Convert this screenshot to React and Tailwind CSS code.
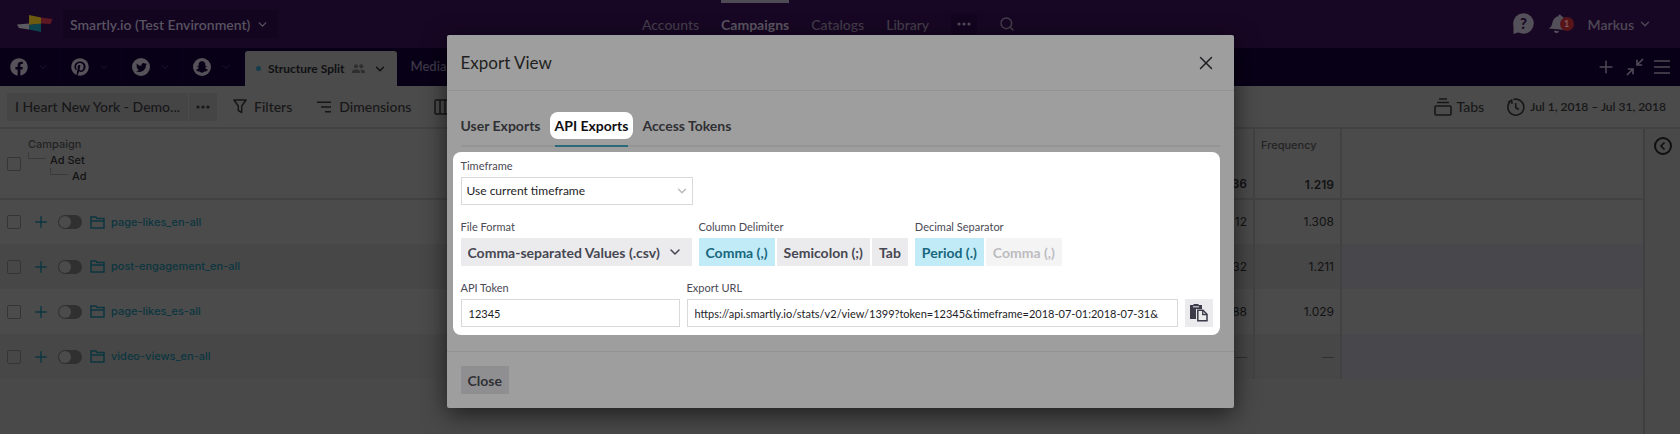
import { FaFacebook, FaPinterest, FaTwitter, FaSnapchatGhost } from 'react-icons/fa';
import { ChevronDown, Plus, Search, X } from 'lucide-react';

const campaigns = [
  { name: 'page-likes_en-all', reach: '12', frequency: '1.308' },
  { name: 'post-engagement_en-all', reach: '32', frequency: '1.211' },
  { name: 'page-likes_es-all', reach: '88', frequency: '1.029' },
  { name: 'video-views_en-all', reach: '—', frequency: '—' },
];

function Logo() {
  return (
    <svg width="36" height="18" viewBox="0 0 36 18" role="img" aria-label="Smartly.io">
      <path d="M0 9.500 12 8.500v6L2 13z" fill="#5c5c60" />
      <path d="M12 0 24 2.500V9l-12 1z" fill="#6b5a10" />
      <path d="M12 10 24 8.500V17l-12-2.500z" fill="#0e4450" />
      <path d="M24 2.500 35.500 4l-2 5-9.500-.5z" fill="#5d1822" />
    </svg>
  );
}

function HelpIcon() {
  return (
    <svg width="22" height="22" viewBox="0 0 22 22" aria-hidden="true">
      <circle cx="11.500" cy="10.500" r="10.300" fill="#54505a" />
      <path d="M1.500 11v10l6-2z" fill="#54505a" />
      <text x="11.500" y="15.500" textAnchor="middle" fontFamily="Lato, sans-serif" fontSize="15" fontWeight="900" fill="#170824">
        ?
      </text>
    </svg>
  );
}

function BellIcon() {
  return (
    <svg width="18" height="20" viewBox="0 0 18 20" fill="#54505a" aria-hidden="true">
      <path d="M10.500 1.200a1.400 1.400 0 0 1 2.600.6c2.600 1 3.600 3.200 3.400 6L16 13.500l1.200 2.500L.6 14.600l2.600-2.100 1.600-5.200C5.600 4.700 7.700 2.600 10.500 2.300z" />
      <path d="M6 16.400l5 .8c-.4 1.300-1.500 2-2.800 1.800-1.300-.2-2.200-1.200-2.200-2.600z" />
    </svg>
  );
}

function CollapseIcon() {
  return (
    <svg width="18" height="18" viewBox="0 0 18 18" fill="none" stroke="#4e4956" strokeWidth="1.700" aria-hidden="true">
      <path d="M17 1l-6 6M11 1.800V7h5.200M1 17l6-6M7 16.200V11H1.800" />
    </svg>
  );
}

function MenuIcon() {
  return (
    <svg width="16" height="16" viewBox="0 0 16 16" stroke="#4e4956" strokeWidth="1.700" aria-hidden="true">
      <path d="M0 2h16M0 8h16M0 14h16" />
    </svg>
  );
}

function PeopleIcon() {
  return (
    <svg width="13" height="10" viewBox="0 0 13 10" fill="#2f2f30" aria-hidden="true">
      <circle cx="4" cy="2.200" r="2" />
      <circle cx="9.300" cy="2.200" r="2" />
      <path d="M0 9V7.500C0 6 2.300 5.400 4 5.400s4 .6 4 2.100V9zM9 9h4V7.500c0-1.400-2-2.100-3.800-2.100-.3 0-.6 0-.9.100.5.500.7 1.100.7 2z" />
    </svg>
  );
}

function FilterIcon() {
  return (
    <svg width="14" height="15" viewBox="0 0 14 15" fill="none" stroke="#171718" strokeWidth="1.500" strokeLinejoin="round" aria-hidden="true">
      <path d="M1 1h12L8.700 7v6.500L5.300 11.500V7z" />
    </svg>
  );
}

function DimensionsIcon() {
  return (
    <svg width="15" height="12" viewBox="0 0 15 12" stroke="#171718" strokeWidth="1.600" aria-hidden="true">
      <path d="M0 1.200h14M4 6h10M8 10.800h6" />
    </svg>
  );
}

function ColumnsIcon() {
  return (
    <svg width="16" height="16" viewBox="0 0 16 16" fill="none" stroke="#171718" strokeWidth="1.500" aria-hidden="true">
      <rect x="1" y="1" width="14" height="14" rx="1" />
      <path d="M6 1v14M11 1v14" />
    </svg>
  );
}

function TabsIcon() {
  return (
    <svg width="18" height="18" viewBox="0 0 18 18" fill="none" stroke="#171718" strokeWidth="1.600" aria-hidden="true">
      <path d="M5 1h8M3 4.500h12" />
      <rect x="1" y="8" width="16" height="9" rx="1" />
    </svg>
  );
}

function ClockIcon() {
  return (
    <svg width="18" height="18" viewBox="0 0 18 18" fill="none" stroke="#171718" strokeWidth="1.600" aria-hidden="true">
      <path d="M6.500 1.500A8 8 0 1 1 3 3.700" />
      <path d="M1.200 4.200 4.600 2.300l.5 3.600" />
      <path d="M8.700 5v4.500l3 2" />
    </svg>
  );
}

function FolderIcon() {
  return (
    <svg width="15" height="13" viewBox="0 0 15 13" fill="none" stroke="#0c3640" strokeWidth="1.500" aria-hidden="true">
      <path d="M1 12V1h5l1 1.500h7V12zM1 5h13" />
    </svg>
  );
}

function PasteIcon() {
  return (
    <svg width="18" height="18" viewBox="0 0 18 18" aria-hidden="true">
      <path d="M0 1h3.500V0h5v1H12v4H6v10H0z" fill="#3b3b4a" />
      <path d="M3 2.800h6" stroke="#ebebed" />
      <path d="M7.800 6.300h5.200l4 4v6.400H7.800z" fill="#ebebed" stroke="#3b3b4a" strokeWidth="1.500" />
      <path d="M12.700 6.300v4.200H17" fill="none" stroke="#3b3b4a" strokeWidth="1.300" />
    </svg>
  );
}

function Dots() {
  return (
    <svg width="14" height="4" viewBox="0 0 14 4" fill="currentColor" aria-hidden="true">
      <circle cx="2" cy="2" r="1.600" />
      <circle cx="7" cy="2" r="1.600" />
      <circle cx="12" cy="2" r="1.600" />
    </svg>
  );
}

function TopBar() {
  return (
    <header className="grid h-12 grid-cols-[1fr_auto_1fr] items-center bg-[#180724] pr-7 pl-[17px] text-[14px] font-semibold text-[#4e4956]">
      <div className="flex items-center gap-[10px]">
        <a href="#home"><Logo /></a>
        <button className="flex h-7 items-center gap-[6px] rounded-[2px] bg-[#130420] px-[7px] font-semibold text-[#585360]">
          Smartly.io (Test Environment)
          <ChevronDown size={13} strokeWidth={2.500} className="mr-[2px]" />
        </button>
      </div>
      <nav className="flex h-full items-center gap-[22px] pr-[12px] font-medium text-[#443e4c]">
        <a href="#accounts">Accounts</a>
        <a href="#campaigns" className="flex h-full items-center border-t-3 border-[#4f4b54] pb-[3px] font-bold text-[#5b5662]">Campaigns</a>
        <a href="#catalogs">Catalogs</a>
        <a href="#library">Library</a>
        <button aria-label="More" className="flex h-5 w-[26px] items-center justify-center rounded-[2px] bg-[#130420] text-[#514c59]"><Dots /></button>
        <button aria-label="Search"><Search size={16} strokeWidth={2.200} /></button>
      </nav>
      <div className="flex items-center justify-end gap-[14px]">
        <button aria-label="Help"><HelpIcon /></button>
        <button aria-label="Notifications" className="flex items-center">
          <BellIcon />
          <span className="-ml-[6px] flex size-[14px] items-center justify-center rounded-full bg-[#571519] text-[9px] text-[#8a6468]">1</span>
        </button>
        <button className="flex items-center gap-[4px] font-semibold">Markus<ChevronDown size={14} strokeWidth={2.300} /></button>
      </div>
    </header>
  );
}

function ChannelButton({ label, children }) {
  return (
    <button aria-label={label} className="flex h-full w-[61px] items-center gap-[9px] border-r border-[#0b011d] pl-[10px]">
      {children}
      <ChevronDown size={12} strokeWidth={2} className="text-[#1f1731]" />
    </button>
  );
}

function TabBar() {
  return (
    <div className="flex h-[38px] items-center bg-[#080017] pr-[10px]">
      <ChannelButton label="Facebook"><FaFacebook size={18} color="#555259" /></ChannelButton>
      <ChannelButton label="Pinterest"><FaPinterest size={18} color="#555259" /></ChannelButton>
      <ChannelButton label="Twitter">
        <span className="flex size-[18px] items-center justify-center rounded-full bg-[#555259]"><FaTwitter size={11} color="#080017" /></span>
      </ChannelButton>
      <ChannelButton label="Snapchat">
        <span className="flex size-[18px] items-center justify-center rounded-full bg-[#555259]"><FaSnapchatGhost size={12} color="#080017" /></span>
      </ChannelButton>
      <button className="ml-px flex h-[35px] items-center self-end rounded-t-[3px] bg-[#4b4b4b] pr-[10px] pl-[11px] text-[12px] font-bold text-[#101012]">
        <span className="mr-[7px] size-[5px] rounded-full bg-[#153c4d]" />
        Structure Split
        <span className="mr-[8px] ml-[8px]"><PeopleIcon /></span>
        <ChevronDown size={14} strokeWidth={2.300} />
      </button>
      <button className="ml-[13px] text-[13px] font-semibold text-[#3d3848]">Media</button>
      <div className="ml-auto flex items-center gap-[10px] text-[#4e4956]">
        <button aria-label="Add tab"><Plus size={20} strokeWidth={1.800} /></button>
        <button aria-label="Collapse"><CollapseIcon /></button>
        <button aria-label="Menu"><MenuIcon /></button>
      </div>
    </div>
  );
}

function Toolbar() {
  return (
    <div className="flex h-[43px] items-center border-b-2 border-[#424243] bg-[#4b4b4b] px-[7px] text-[14px] font-medium text-[#171718]">
      <button className="h-7 bg-[#454546] px-2">I Heart New York - Demo...</button>
      <button aria-label="View options" className="ml-px flex h-7 w-7 items-center justify-center bg-[#454546]"><Dots /></button>
      <button className="ml-4 flex items-center gap-[7px]"><FilterIcon />Filters</button>
      <button className="ml-[25px] flex items-center gap-[7px]"><DimensionsIcon />Dimensions</button>
      <button className="ml-[23px] flex items-center gap-[7px]"><ColumnsIcon />Columns</button>
      <button className="ml-auto flex items-center gap-[5px]"><TabsIcon />Tabs</button>
      <button className="mr-[7px] ml-[23px] flex items-center gap-[5px] text-[12px] font-semibold"><ClockIcon />Jul 1, 2018 – Jul 31, 2018</button>
    </div>
  );
}

function Checkbox({ label }) {
  return <input type="checkbox" aria-label={label} className="size-[14px] shrink-0 appearance-none rounded-[2px] border border-[#353536]" />;
}

function CampaignTable() {
  return (
    <div className="flex flex-1 bg-[#494949] font-['Inter',sans-serif] text-[12px] text-[#121213]">
      <div className="flex-1">
        <table className="w-full table-fixed border-collapse">
          <colgroup>
            <col />
            <col className="w-[86px]" />
            <col className="w-[87px]" />
            <col className="w-[302px]" />
          </colgroup>
          <thead>
            <tr className="h-[70px] border-b-2 border-[#424243] bg-[#4b4b4b] text-left">
              <th className="pl-[7px] font-medium">
                <div className="flex items-center gap-[7px]">
                  <Checkbox label="Select all" />
                  <div className="pb-2 text-[11px] leading-4">
                    <div className="text-[#232324]">Campaign</div>
                    <div className="flex gap-1"><span className="mb-[9px] w-[18px] border-b border-l border-[#3a3a3b]" />Ad Set</div>
                    <div className="flex gap-1 pl-[22px]"><span className="mb-[9px] w-[18px] border-b border-l border-[#3a3a3b]" />Ad</div>
                  </div>
                </div>
              </th>
              <th className="border-r-2 border-[#424243] pr-[6px] pb-[5px] text-right align-bottom font-semibold">36</th>
              <th className="border-r-2 border-[#424243] pr-[6px] pb-[5px] pl-[6px] align-bottom">
                <div className="flex h-[56px] flex-col justify-between">
                  <span className="text-[11px] leading-4 font-medium text-[#232324]">Frequency</span>
                  <span className="text-right leading-4 font-semibold">1.219</span>
                </div>
              </th>
              <th />
            </tr>
          </thead>
          <tbody>
            {campaigns.map((c) => (
              <tr key={c.name} className="group h-[45px] odd:bg-[#4b4b4b] even:bg-[#474747]">
                <td className="pl-[7px]">
                  <div className="flex items-center">
                    <Checkbox label={'Select ' + c.name} />
                    <button aria-label={'Expand ' + c.name} className="ml-[11px] text-[#0c3640]"><Plus size={18} strokeWidth={2} /></button>
                    <button role="switch" aria-checked="false" aria-label={'Enable ' + c.name} className="ml-[8px] flex h-[14px] w-6 items-center rounded-full bg-[#303031] px-px">
                      <span className="size-3 rounded-full bg-[#4b4b4b]" />
                    </button>
                    <span className="ml-[8px]"><FolderIcon /></span>
                    <a href="#campaign" className="ml-[6px] text-[11px] font-medium text-[#0c3640]">{c.name}</a>
                  </div>
                </td>
                <td className={'border-r-2 border-[#424243] pr-[6px] text-right ' + (c.reach === '—' ? 'text-[#303031]' : '')}>{c.reach}</td>
                <td className={'border-r-2 border-[#424243] pr-[6px] text-right ' + (c.frequency === '—' ? 'text-[#303031]' : '')}>{c.frequency}</td>
                <td className="group-even:bg-[#48484c]" />
              </tr>
            ))}
          </tbody>
        </table>
      </div>
      <aside className="flex w-[37px] justify-center border-l-2 border-[#3f3f40] pt-[8px]">
        <button aria-label="Open side panel" className="flex size-[18px] items-center justify-center rounded-full border-2 border-[#101012]">
          <svg width="10" height="10" viewBox="0 0 10 10" fill="none" stroke="#101012" strokeWidth="1.700"><path d="M6.500 1.500 3 5l3.500 3.500" /></svg>
        </button>
      </aside>
    </div>
  );
}

function Segment({ state, children }) {
  const look = {
    on: 'bg-[#c2ebf8] text-[#17677d]',
    off: 'bg-[#ebebed] text-[#474752]',
    disabled: 'bg-[#f4f4f5] text-[#bcbcc0]',
  }[state];
  return (
    <button type="button" disabled={state === 'disabled'} aria-pressed={state === 'on'} className={'h-7 px-[7px] text-[14px] font-bold ' + look}>
      {children}
    </button>
  );
}

const labelStyle = 'block text-[11px] leading-4 text-[#4a4a55]';
const inputStyle = 'mt-[3px] block h-7 w-full border border-[#d9d9dc] bg-white px-[7px] text-[11px] text-[#1d1d26] outline-none';

function ExportDialog() {
  return (
    <div className="absolute inset-x-0 top-[35px] flex justify-center">
      <section role="dialog" aria-labelledby="dialog-title" className="w-[787px] max-w-full rounded-[2px] bg-[#9e9e9e] shadow-[0_6px_24px_rgba(0,0,0,0.600)]">
        <div className="flex h-14 items-center justify-between border-b border-[#929293] pr-[17px] pl-[14px]">
          <h2 id="dialog-title" className="text-[17px] text-[#1f1f21]">Export View</h2>
          <button aria-label="Close dialog" className="text-[#1f1f21]"><X size={22} strokeWidth={1.600} /></button>
        </div>
        <div role="tablist" className="mx-[14px] mt-[21px] flex gap-[14px] border-b-2 border-[#949495] text-[14px] leading-[27px] font-bold text-[#303034]">
          <button role="tab" aria-selected="false" className="pb-[6px]">User Exports</button>
          <div className="-mb-[2px] border-b-2 border-[#2a6977] pb-[6px]">
            <button role="tab" aria-selected="true" className="-mx-[5px] rounded-[8px] bg-white px-[5px] text-[#0f0f14]">API Exports</button>
          </div>
          <button role="tab" aria-selected="false" className="pb-[6px]">Access Tokens</button>
        </div>
        <form className="mt-[5px] mr-[14px] ml-[6px] flex flex-col gap-[14px] rounded-[8px] bg-white pt-[6px] pr-[7px] pb-2 pl-2">
          <div className="w-[232px]">
            <label htmlFor="timeframe" className={labelStyle}>Timeframe</label>
            <div className="relative mt-[3px]">
              <select id="timeframe" className="h-7 w-full appearance-none border border-[#d9d9dc] bg-white px-[5px] text-[12px] text-[#1d1d26]">
                <option>Use current timeframe</option>
              </select>
              <ChevronDown size={14} strokeWidth={2.300} className="pointer-events-none absolute top-[7px] right-[4px] text-[#b9b9be]" />
            </div>
          </div>
          <div className="flex gap-[7px]">
            <div className="w-[231px]">
              <label htmlFor="format" className={labelStyle}>File Format</label>
              <div className="relative mt-[3px]">
                <select id="format" className="h-7 w-full appearance-none bg-[#ebebed] px-[7px] text-[14px] font-bold text-[#474752]">
                  <option>Comma-separated Values (.csv)</option>
                </select>
                <ChevronDown size={16} strokeWidth={2.300} className="pointer-events-none absolute top-[6px] right-[9px] text-[#474752]" />
              </div>
            </div>
            <fieldset>
              <legend className={labelStyle}>Column Delimiter</legend>
              <div className="mt-[3px] flex gap-[2px]">
                <Segment state="on">Comma (,)</Segment>
                <Segment state="off">Semicolon (;)</Segment>
                <Segment state="off">Tab</Segment>
              </div>
            </fieldset>
            <fieldset>
              <legend className={labelStyle}>Decimal Separator</legend>
              <div className="mt-[3px] flex gap-[2px]">
                <Segment state="on">Period (.)</Segment>
                <Segment state="disabled">Comma (,)</Segment>
              </div>
            </fieldset>
          </div>
          <div className="flex items-end gap-[7px]">
            <div className="w-[219px]">
              <label htmlFor="token" className={labelStyle}>API Token</label>
              <input id="token" defaultValue="12345" className={inputStyle} />
            </div>
            <div className="flex-1">
              <label htmlFor="url" className={labelStyle}>Export URL</label>
              <input id="url" readOnly value="https://api.smartly.io/stats/v2/view/1399?token=12345&timeframe=2018-07-01:2018-07-31&" className={inputStyle} />
            </div>
            <button type="button" aria-label="Copy URL" className="flex size-7 items-center justify-center bg-[#ebebed]"><PasteIcon /></button>
          </div>
        </form>
        <div className="mt-4 border-t border-[#929293] p-[14px]">
          <button className="h-7 bg-[#8f8f92] px-[7px] text-[14px] font-bold text-[#2f2f34]">Close</button>
        </div>
      </section>
    </div>
  );
}

export default function App() {
  return (
    <div className="relative flex min-h-screen flex-col bg-[#494949] font-['Lato',sans-serif]">
      <TopBar />
      <TabBar />
      <Toolbar />
      <CampaignTable />
      <ExportDialog />
    </div>
  );
}
